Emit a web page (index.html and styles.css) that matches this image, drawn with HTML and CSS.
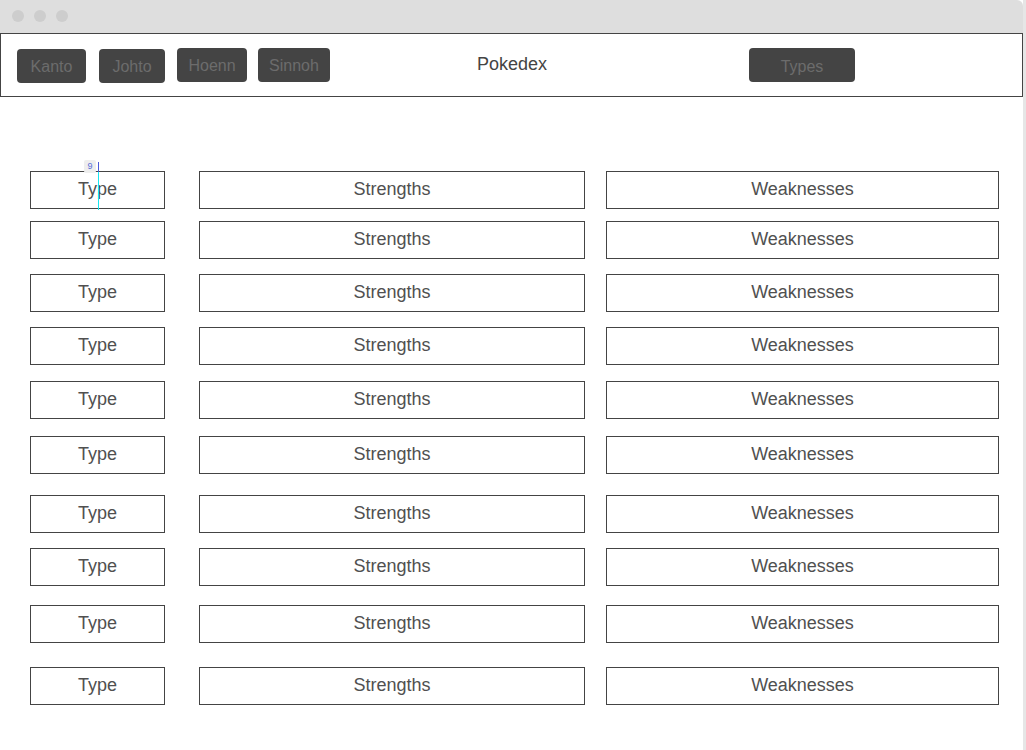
FILE: index.html
```html
<!DOCTYPE html>
<html>
<head>
<meta charset="utf-8">
<link rel="stylesheet" href="styles.css">
</head>
<body>
<div class="frame">
  <div class="window">
    <div class="titlebar">
      <span class="dot"></span><span class="dot"></span><span class="dot"></span>
    </div>
    <div class="header">
      <div class="regions">
        <button class="btn btn-kanto">Kanto</button>
        <button class="btn btn-johto">Johto</button>
        <button class="btn btn-hoenn">Hoenn</button>
        <button class="btn btn-sinnoh">Sinnoh</button>
      </div>
      <div class="title">Pokedex</div>
      <button class="btn btn-types">Types</button>
    </div>
    <div class="table">
      <div class="row r1">
        <div class="cell c-type">Type
          <span class="cursor-badge">9</span><span class="cursor-line"></span>
        </div>
        <div class="cell c-str">Strengths</div>
        <div class="cell c-weak">Weaknesses</div>
      </div>
      <div class="row r2"><div class="cell c-type">Type</div><div class="cell c-str">Strengths</div><div class="cell c-weak">Weaknesses</div></div>
      <div class="row r3"><div class="cell c-type">Type</div><div class="cell c-str">Strengths</div><div class="cell c-weak">Weaknesses</div></div>
      <div class="row r4"><div class="cell c-type">Type</div><div class="cell c-str">Strengths</div><div class="cell c-weak">Weaknesses</div></div>
      <div class="row r5"><div class="cell c-type">Type</div><div class="cell c-str">Strengths</div><div class="cell c-weak">Weaknesses</div></div>
      <div class="row r6"><div class="cell c-type">Type</div><div class="cell c-str">Strengths</div><div class="cell c-weak">Weaknesses</div></div>
      <div class="row r7"><div class="cell c-type">Type</div><div class="cell c-str">Strengths</div><div class="cell c-weak">Weaknesses</div></div>
      <div class="row r8"><div class="cell c-type">Type</div><div class="cell c-str">Strengths</div><div class="cell c-weak">Weaknesses</div></div>
      <div class="row r9"><div class="cell c-type">Type</div><div class="cell c-str">Strengths</div><div class="cell c-weak">Weaknesses</div></div>
      <div class="row r10"><div class="cell c-type">Type</div><div class="cell c-str">Strengths</div><div class="cell c-weak">Weaknesses</div></div>
    </div>
  </div>
  <div class="edge"></div>
</div>
</body>
</html>
```

FILE: styles.css
```css
* { box-sizing: border-box; }
html, body {
  margin: 0;
  padding: 0;
  background: #ffffff;
  font-family: "Liberation Sans", Arial, sans-serif;
  color: #444;
}
.frame {
  display: flex;
  width: 1026px;
  height: 750px;
  overflow: hidden;
}
.window {
  width: 1023px;
  height: 750px;
  background: #fff;
}
.edge {
  width: 3px;
  height: 750px;
  background: #e6e6e6;
}
.titlebar {
  height: 33px;
  background: #dedede;
  border-top-right-radius: 6px;
  display: flex;
  align-items: center;
  gap: 10px;
  padding-left: 12px;
  padding-bottom: 1px;
}
.dot {
  width: 12px;
  height: 12px;
  border-radius: 50%;
  background: #cdcdcd;
}
.header {
  position: relative;
  height: 64px;
  border: 1px solid #444;
  display: flex;
  align-items: flex-start;
}
.regions {
  display: flex;
  padding-left: 16px;
  padding-top: 14px;
}
.btn {
  background: #444;
  color: #6c6c6c;
  border: none;
  border-radius: 4px;
  height: 34px;
  font-family: "Liberation Sans", Arial, sans-serif;
  font-size: 16px;
  padding: 0;
  margin: 0;
  display: flex;
  align-items: center;
  justify-content: center;
}
.btn-kanto { width: 69px; margin-top: 1px; padding-top: 2px; }
.btn-johto { width: 66px; margin-left: 13px; margin-top: 1px; padding-top: 2px; }
.btn-hoenn { width: 70px; margin-left: 12px; padding-top: 2px; }
.btn-sinnoh { width: 72px; margin-left: 11px; padding-top: 2px; }
.title {
  margin-left: 146px;
  padding-top: 20px;
  font-size: 18px;
  color: #444;
  width: 72px;
  text-align: center;
}
.btn-types {
  width: 106px;
  margin-left: 201px;
  margin-top: 14px;
  padding-top: 3px;
}
.table {
  padding-left: 30px;
  padding-top: 74px;
}
.row {
  display: flex;
  height: 38px;
}
.r2 { margin-top: 12px; }
.r3 { margin-top: 15px; }
.r4 { margin-top: 15px; }
.r5 { margin-top: 16px; }
.r6 { margin-top: 17px; }
.r7 { margin-top: 21px; }
.r8 { margin-top: 15px; }
.r9 { margin-top: 19px; }
.r10 { margin-top: 24px; }
.cell {
  border: 1px solid #444;
  height: 38px;
  display: flex;
  align-items: center;
  justify-content: center;
  font-size: 18px;
  color: #505050;
  padding-bottom: 1px;
}
.c-type { width: 135px; position: relative; }
.c-str { width: 386px; margin-left: 34px; }
.c-weak { width: 393px; margin-left: 21px; }
.cursor-badge {
  position: absolute;
  left: 53px;
  top: -12px;
  width: 12px;
  height: 13px;
  background: #eeeeee;
  color: #5a6fd8;
  font-size: 9px;
  line-height: 13px;
  text-align: center;
  border-radius: 2px;
}
.cursor-line {
  position: absolute;
  left: 67px;
  top: 0;
  width: 1px;
  height: 38px;
  background: #19e6f0;
}
.cursor-line::before {
  content: "";
  position: absolute;
  left: 0;
  top: -10px;
  width: 1px;
  height: 10px;
  background: #4a5ad8;
}
```
